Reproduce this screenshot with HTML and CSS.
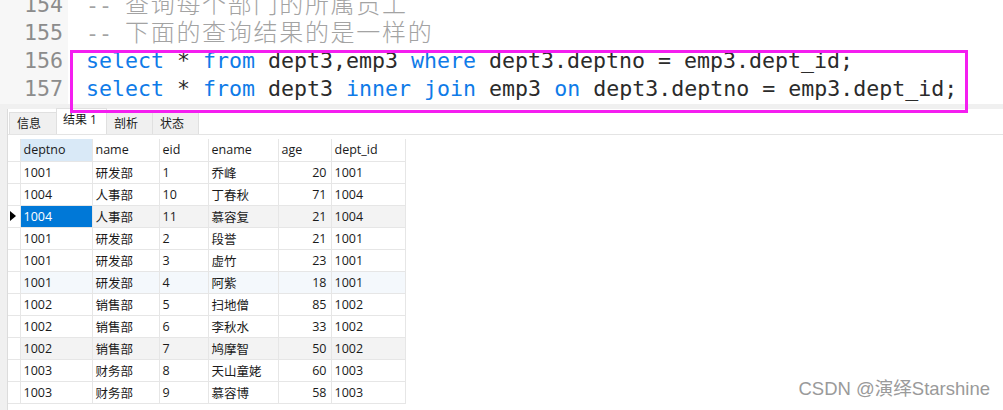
FILE: index.html
```html
<!DOCTYPE html>
<html lang="zh-CN">
<head>
  <meta charset="UTF-8">
  <title>查询结果</title>
  <link rel="stylesheet" href="styles.css">
</head>
<body>
  <div class="editor">
    <div class="gutter">
      <div class="lines">
        <div class="ln">154</div>
        <div class="ln">155</div>
        <div class="ln">156</div>
        <div class="ln">157</div>
      </div>
    </div>
    <div class="code">
      <div class="lines">
        <div class="line comment">-- <span class="cjk">查询每个部门的所属员工</span></div>
        <div class="line comment">-- <span class="cjk">下面的查询结果的是一样的</span></div>
        <div class="line"><span class="kw">select</span> * <span class="kw">from</span> dept3,emp3 <span class="kw">where</span> dept3.deptno = emp3.dept_id;</div>
        <div class="line"><span class="kw">select</span> * <span class="kw">from</span> dept3 <span class="kw">inner</span> <span class="kw">join</span> emp3 <span class="kw">on</span> dept3.deptno = emp3.dept_id;</div>
      </div>
    </div>
  </div>

  <!-- annotation box drawn over the two queries -->
  <div class="highlight-box"></div>

  <div class="splitter"></div>

  <div class="panel">
    <div class="panel-edge"></div>
    <div class="panel-body">
      <div class="tabs">
        <div class="tab">信息</div>
        <div class="tab active">结果 1</div>
        <div class="tab">剖析</div>
        <div class="tab">状态</div>
      </div>

      <table class="grid">
        <thead>
          <tr>
            <th class="ind"></th>
            <th class="col-deptno sel-head">deptno</th>
            <th class="col-name">name</th>
            <th class="col-eid">eid</th>
            <th class="col-ename">ename</th>
            <th class="col-age">age</th>
            <th class="col-dept">dept_id</th>
          </tr>
        </thead>
        <tbody>
          <tr><td class="ind"></td><td>1001</td><td>研发部</td><td>1</td><td>乔峰</td><td class="num">20</td><td>1001</td></tr>
          <tr><td class="ind"></td><td>1004</td><td>人事部</td><td>10</td><td>丁春秋</td><td class="num">71</td><td>1004</td></tr>
          <tr class="tint"><td class="ind"><span class="arrow"></span></td><td class="selected">1004</td><td>人事部</td><td>11</td><td>慕容复</td><td class="num">21</td><td>1004</td></tr>
          <tr><td class="ind"></td><td>1001</td><td>研发部</td><td>2</td><td>段誉</td><td class="num">21</td><td>1001</td></tr>
          <tr><td class="ind"></td><td>1001</td><td>研发部</td><td>3</td><td>虚竹</td><td class="num">23</td><td>1001</td></tr>
          <tr class="hover"><td class="ind"></td><td>1001</td><td>研发部</td><td>4</td><td>阿紫</td><td class="num">18</td><td>1001</td></tr>
          <tr><td class="ind"></td><td>1002</td><td>销售部</td><td>5</td><td>扫地僧</td><td class="num">85</td><td>1002</td></tr>
          <tr><td class="ind"></td><td>1002</td><td>销售部</td><td>6</td><td>李秋水</td><td class="num">33</td><td>1002</td></tr>
          <tr class="tint"><td class="ind"></td><td>1002</td><td>销售部</td><td>7</td><td>鸠摩智</td><td class="num">50</td><td>1002</td></tr>
          <tr><td class="ind"></td><td>1003</td><td>财务部</td><td>8</td><td>天山童姥</td><td class="num">60</td><td>1003</td></tr>
          <tr><td class="ind"></td><td>1003</td><td>财务部</td><td>9</td><td>慕容博</td><td class="num">58</td><td>1003</td></tr>
        </tbody>
      </table>
    </div>
  </div>

  <div class="watermark">CSDN @演绎Starshine</div>
</body>
</html>
```

FILE: styles.css
```css
* {
  box-sizing: border-box;
}

body {
  margin: 0;
  width: 1003px;
  height: 410px;
  overflow: hidden;
  background: #fff;
  position: relative;
  font-family: "Open Sans", "Noto Sans CJK SC", sans-serif;
}

/* SQL editor */
.editor {
  display: flex;
  height: 104px;
  overflow: hidden;
  font-family: "DejaVu Sans Mono", "Noto Sans CJK SC", monospace;
  font-size: 21.6px;
}

.lines {
  margin-top: -9px;
}

.gutter {
  width: 68px;
  background: #f7f7f7;
  color: #8c8c8c;
  text-align: right;
  padding-right: 5px;
}

.ln,
.line {
  height: 28px;
  line-height: 28px;
  white-space: pre;
}

.code {
  flex: 1;
  padding-left: 18px;
  color: #2b2b2b;
}

.kw {
  color: #0f7be8;
}

.comment {
  color: #a3a3a3;
}

.cjk {
  font-size: 24px;
  letter-spacing: 1.7px;
  font-weight: 300;
}

.highlight-box {
  position: absolute;
  left: 70px;
  top: 50px;
  width: 898px;
  height: 63px;
  border: 3px solid #f41ef0;
}

.splitter {
  height: 5px;
  background: #f0f0f0;
}

/* Result panel */
.panel {
  display: flex;
  height: 301px;
}

.panel-edge {
  width: 8px;
  background: #f0f0f0;
  border-right: 1px solid #dcdcdc;
}

.panel-body {
  flex: 1;
}

.tabs {
  display: flex;
  align-items: flex-end;
  height: 26px;
  padding-left: 1px;
  border-bottom: 1px solid #e4e4e4;
  font-size: 12px;
  color: #1a1a1a;
}

.tab {
  height: 22px;
  line-height: 22px;
  padding: 0 7px;
  background: #f0f0f0;
  border: 1px solid #e0e0e0;
  border-bottom: none;
  margin-right: -1px;
}

.tab:first-child {
  width: 48px;
}

.tab.active {
  height: 26px;
  line-height: 22px;
  background: #fff;
  width: 51px;
  padding: 0 6px;
}

.tab:nth-child(3),
.tab:nth-child(4) {
  width: 47px;
}

.grid {
  margin-top: 4px;
  border-collapse: collapse;
  table-layout: fixed;
  font-size: 12.5px;
  color: #1a1a1a;
}

.grid th,
.grid td {
  height: 22px;
  padding: 0 3px;
  text-align: left;
  font-weight: normal;
  border-right: 1px solid #e6e6e6;
  border-bottom: 1px solid #e6e6e6;
  white-space: nowrap;
}

.grid .ind {
  width: 12px;
  padding: 0;
  position: relative;
}

.col-deptno { width: 72px; }
.col-name { width: 67px; }
.col-eid { width: 49px; }
.col-ename { width: 70px; }
.col-age { width: 53px; }
.col-dept { width: 74px; }

.grid th.sel-head {
  background: #d9e9f7;
}

.grid td.num {
  text-align: right;
  padding-right: 4px;
}

.grid tr.tint td {
  background: #f3f3f3;
}

.grid tr.hover td {
  background: #f4f8fc;
}

.grid tr.tint td.ind,
.grid tr.hover td.ind {
  background: #fff;
}

.grid td.selected {
  background: #0078d7 !important;
  color: #fff;
}

.arrow {
  position: absolute;
  left: 2px;
  top: 5px;
  border-left: 6px solid #000;
  border-top: 5px solid transparent;
  border-bottom: 5px solid transparent;
}

.watermark {
  position: absolute;
  right: 13px;
  bottom: 10px;
  font-family: "Liberation Sans", "Noto Sans CJK SC", sans-serif;
  font-size: 18.5px;
  color: #9a9a9a;
  text-shadow: 0 0 1px #fff;
}
```
